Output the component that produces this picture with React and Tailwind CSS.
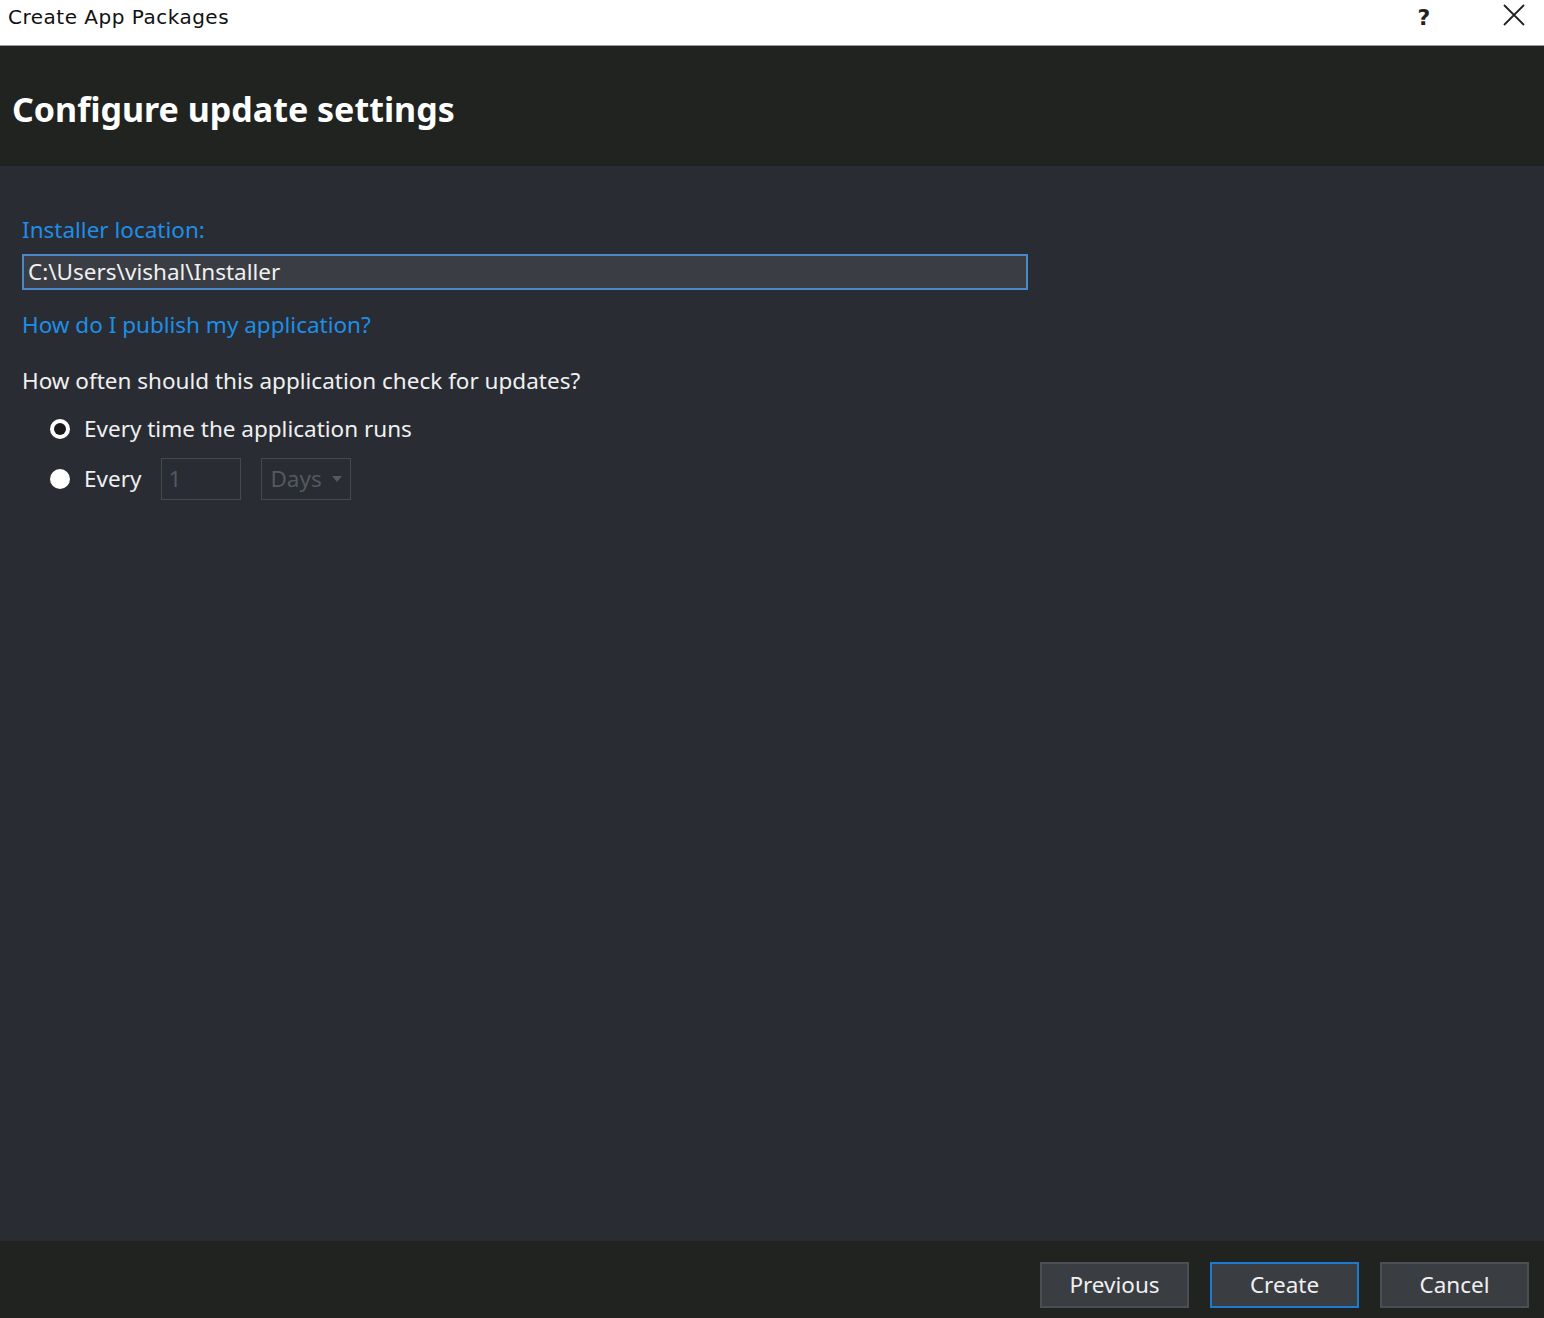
export default function App() {
  return (
    <div
      className="w-[1544px] h-[1318px] flex flex-col bg-[#292c33] overflow-hidden"
      style={{ fontFamily: '"Noto Sans", "Open Sans", sans-serif' }}
    >
      {/* Title bar */}
      <div className="h-[46px] shrink-0 bg-white border-b border-[#9a9a9a] flex items-start justify-between">
        <span className="pl-[8px] pt-[2px] text-[20px] text-[#111] tracking-[0.5px]" style={{ fontFamily: '"DejaVu Sans", sans-serif' }}>
          Create App Packages
        </span>
        <div className="flex items-start h-full">
          <span className="w-[40px] pt-[1px] text-center text-[22px] text-[#222] font-semibold" style={{ fontFamily: '"DejaVu Sans", sans-serif' }}>?</span>
          <button className="ml-[40px] w-[60px] h-[30px] flex items-center justify-center">
            <svg width="22" height="22" viewBox="0 0 22 22" fill="none" stroke="#222" strokeWidth="1.8">
              <path d="M1 1l20 20M21 1L1 21" />
            </svg>
          </button>
        </div>
      </div>

      {/* Header */}
      <div className="h-[120px] shrink-0 bg-[#202320] flex items-center px-[12px] pt-[6px]">
        <h1 className="text-[34px] font-bold text-white leading-none">Configure update settings</h1>
      </div>

      {/* Body */}
      <div className="flex-1 px-[22px] pt-[49px] text-[22.5px]">
        <div className="text-[#1f8ee6] leading-[30px]">Installer location:</div>
        <div className="mt-[9px] w-[1006px] h-[36px] border-2 border-[#4a88c8] bg-[#3a3d43] flex items-center px-[4px] text-[#f0f0f0]">
          C:\Users\vishal\Installer
        </div>
        <div className="mt-[20px] text-[#1f8ee6] leading-[30px]">How do I publish my application?</div>
        <div className="mt-[26px] text-[#f0f0f0] leading-[30px]">How often should this application check for updates?</div>

        <div className="mt-[18px] pl-[28px] flex flex-col gap-[20px]">
          <label className="flex items-center gap-[14px] h-[30px] text-[#f0f0f0]">
            <span className="w-[20px] h-[20px] rounded-full bg-white flex items-center justify-center">
              <span className="w-[12px] h-[12px] rounded-full bg-[#1a1a1a]" />
            </span>
            Every time the application runs
          </label>
          <label className="flex items-center gap-[14px] h-[30px] text-[#f0f0f0]">
            <span className="w-[20px] h-[20px] rounded-full bg-white" />
            <span>Every</span>
            <span className="ml-[6px] w-[80px] h-[42px] border border-[#45484d] flex items-center px-[6px] text-[#55585e]">1</span>
            <span className="ml-[6px] w-[90px] h-[42px] border border-[#45484d] flex items-center justify-between px-[8px] text-[#55585e]">
              Days
              <svg width="10" height="6" viewBox="0 0 10 6"><path d="M0 0h10L5 6z" fill="#55585e" /></svg>
            </span>
          </label>
        </div>
      </div>

      {/* Footer */}
      <div className="h-[77px] shrink-0 bg-[#202320] flex items-start justify-end gap-[21px] pt-[21px] pr-[15px] text-[22.5px] text-[#f0f0f0]">
        <button className="w-[149px] h-[46px] bg-[#3a3d42] border-2 border-[#4b4e52]">Previous</button>
        <button className="w-[149px] h-[46px] bg-[#3a3d42] border-2 border-[#1c7ad0]">Create</button>
        <button className="w-[149px] h-[46px] bg-[#3a3d42] border-2 border-[#4b4e52]">Cancel</button>
      </div>
    </div>
  );
}
